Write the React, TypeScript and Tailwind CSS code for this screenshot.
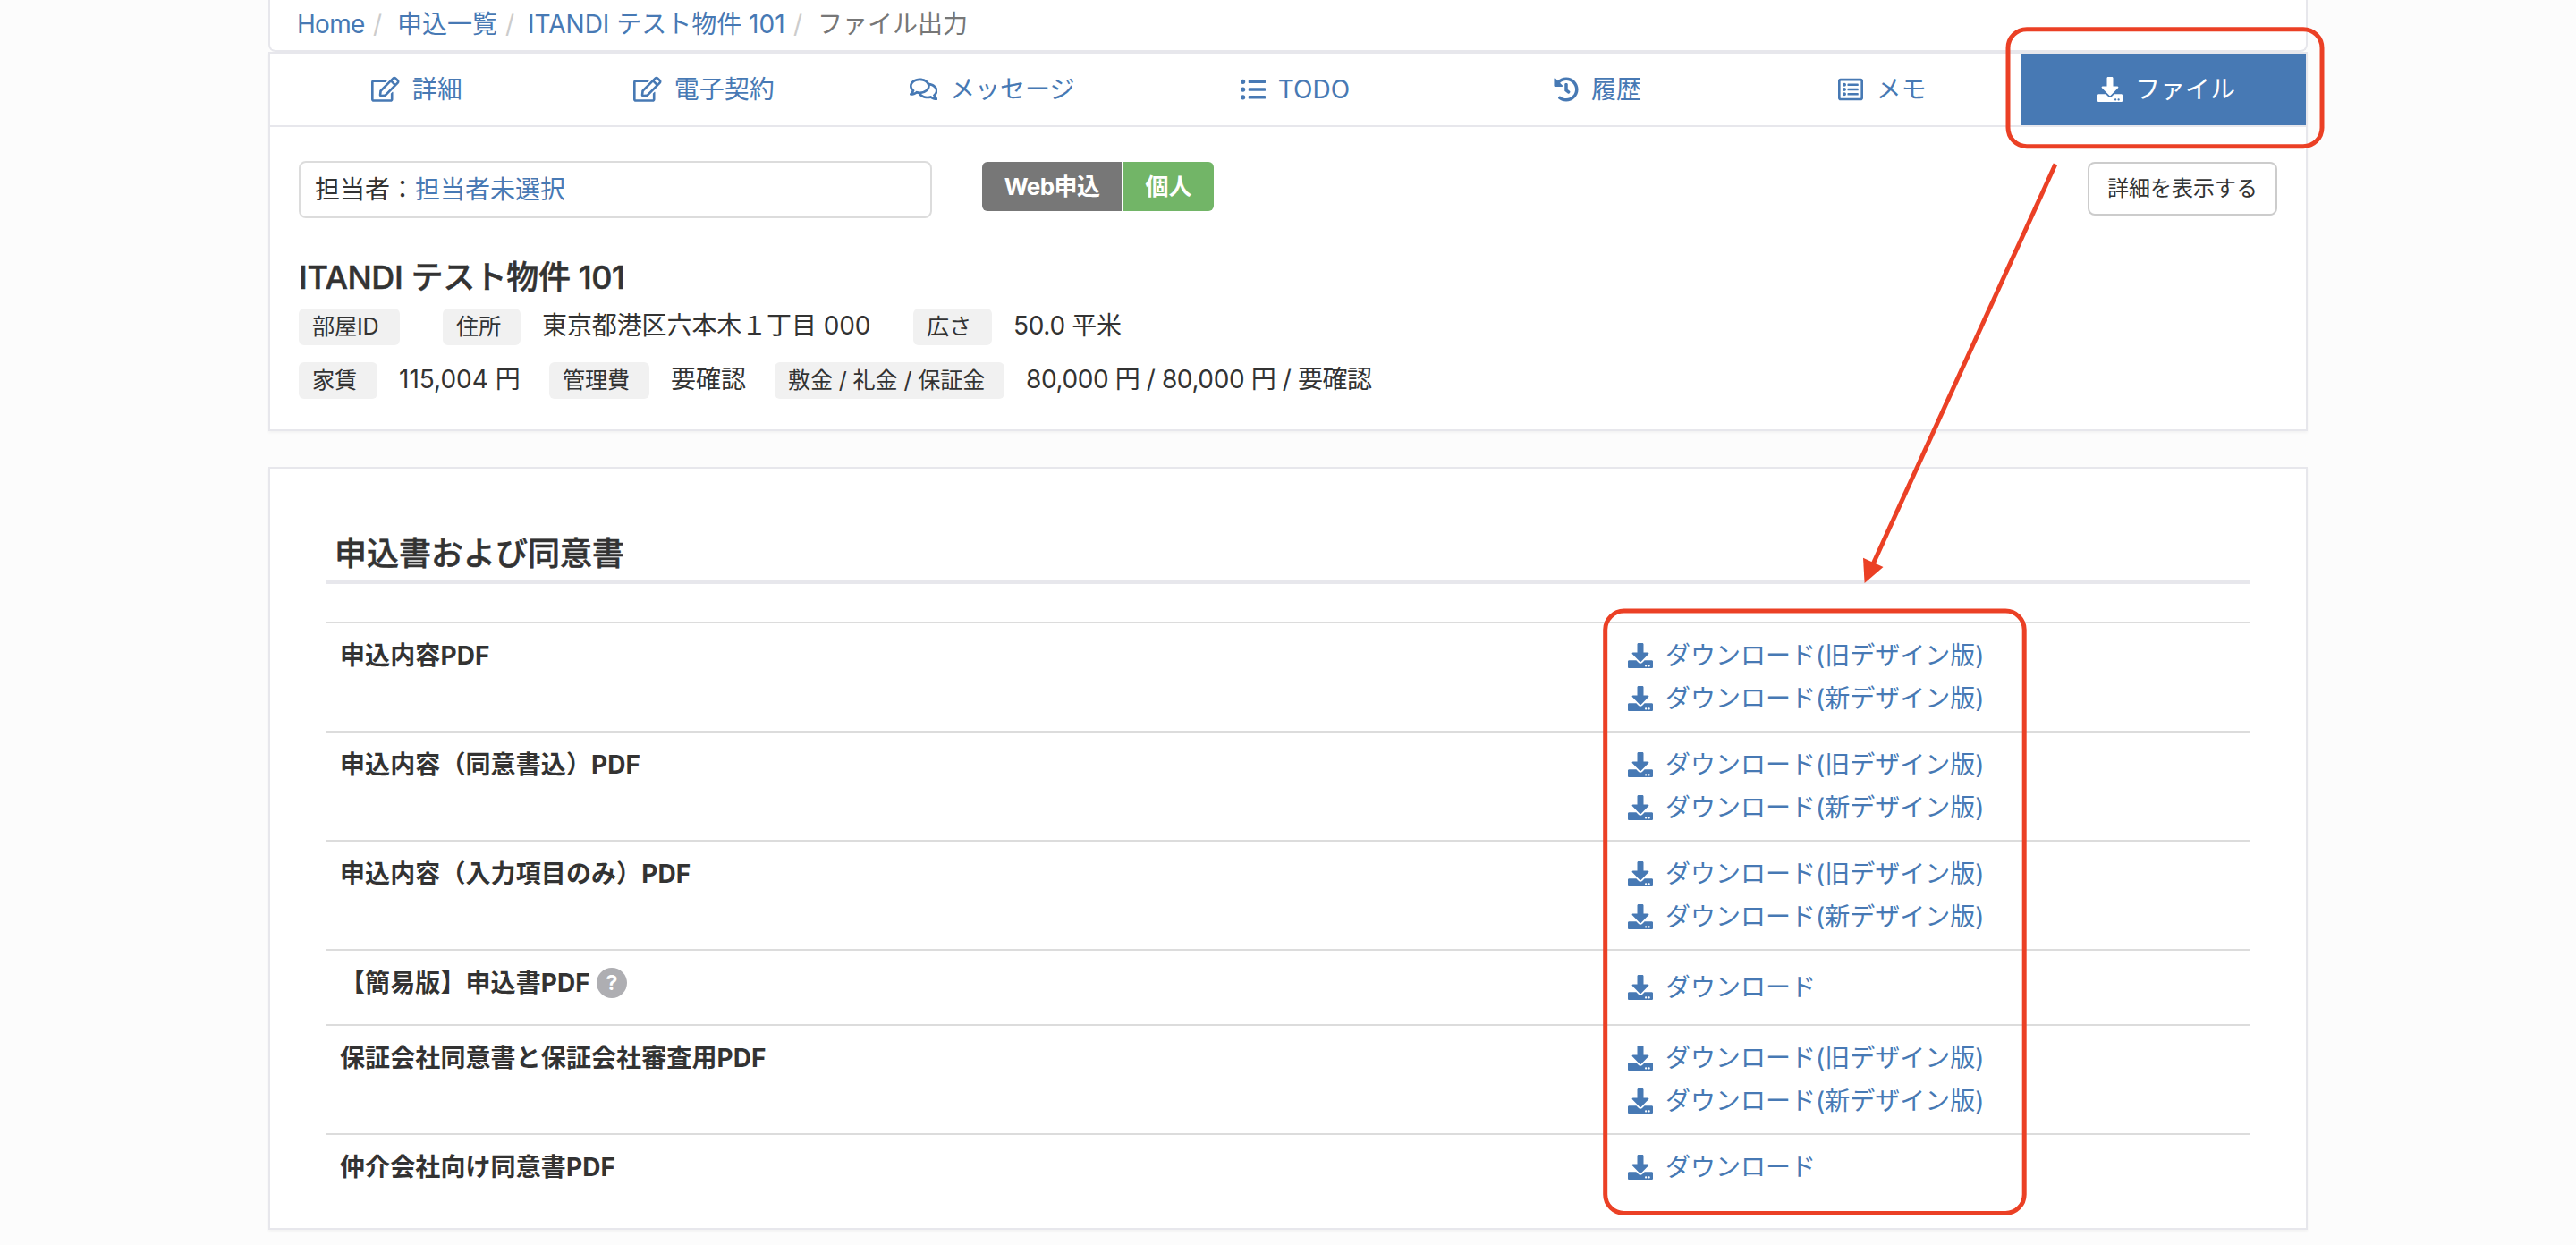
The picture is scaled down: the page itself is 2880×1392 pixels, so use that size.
import React from 'react';
import type { IconType } from 'react-icons';
import { FaRegEdit, FaRegComments, FaListUl, FaHistory, FaRegListAlt, FaDownload } from 'react-icons/fa';

const tabs: { name: string; icon: IconType; width: string; wide?: boolean; active?: boolean }[] = [
  { name: '詳細', icon: FaRegEdit, width: 'w-[326px] pl-[2px]', wide: true },
  { name: '電子契約', icon: FaRegEdit, width: 'w-[316px] pl-[2px]', wide: true },
  { name: 'メッセージ', icon: FaRegComments, width: 'w-[328px] pl-[2px]', wide: true },
  { name: 'TODO', icon: FaListUl, width: 'w-[352px]' },
  { name: '履歴', icon: FaHistory, width: 'w-[322px] pl-[2px]' },
  { name: 'メモ', icon: FaRegListAlt, width: 'w-[314px] pl-[3px]' },
  { name: 'ファイル', icon: FaDownload, width: 'w-[318px] pl-[6px]', active: true },
];

const bothDesigns = ['ダウンロード(旧デザイン版)', 'ダウンロード(新デザイン版)'];

const files: { name: string; links: string[]; height: string; help?: boolean }[] = [
  { name: '申込内容PDF', links: bothDesigns, height: 'h-[122px]' },
  { name: '申込内容（同意書込）PDF', links: bothDesigns, height: 'h-[122px]' },
  { name: '申込内容（入力項目のみ）PDF', links: bothDesigns, height: 'h-[122px]' },
  { name: '【簡易版】申込書PDF', links: ['ダウンロード'], height: 'h-[84px]', help: true },
  { name: '保証会社同意書と保証会社審査用PDF', links: bothDesigns, height: 'h-[122px]' },
  { name: '仲介会社向け同意書PDF', links: ['ダウンロード'], height: 'h-[74px]' },
];

function Tag({ className, children }: { className: string; children: React.ReactNode }) {
  return (
    <span className={`h-[41px] shrink-0 rounded-md bg-[#f1f1f1] pl-[15px] text-[25.2px] leading-[41px] tracking-[-0.2px] ${className}`}>
      {children}
    </span>
  );
}

function Value({ className, children }: { className: string; children?: React.ReactNode }) {
  return <span className={`h-[41px] shrink-0 leading-[38px] ${className}`}>{children}</span>;
}

// Red frames and arrow drawn on top of the page
function Annotations() {
  return (
    <svg className="pointer-events-none absolute top-0 left-0" width="2880" height="1392" viewBox="0 0 2880 1392" fill="none">
      <rect x="2245" y="32.7" width="351" height="131" rx="21" stroke="#eb4025" strokeWidth="5" />
      <rect x="1794.7" y="683" width="468.5" height="673.5" rx="21" stroke="#eb4025" strokeWidth="5" />
      <path d="M2298 183.500L2093 633" stroke="#eb4025" strokeWidth="5" />
      <path d="M2084.600 652L2083 623.700L2105.500 634Z" fill="#eb4025" />
    </svg>
  );
}

export default function App() {
  return (
    <div className="relative h-[1392px] w-[2880px] overflow-hidden bg-[#fcfcfc] font-['Inter','Noto_Sans_CJK_JP',sans-serif] text-[28px] text-[#333]">
      <div className="mx-auto w-[2280px]">
        {/* Breadcrumb */}
        <nav className="flex h-[58px] items-center rounded-b-lg border-x-2 border-b-2 border-[#e7e7ec] bg-white pb-[3px] pl-[30px] leading-[40px] text-[#4779b4]">
          <a className="w-[83px] tracking-[-0.7px]">Home</a>
          <span className="w-[29px] pl-[2px] text-[#ccc]">/</span>
          <a className="w-[119px]">申込一覧</a>
          <span className="w-[27px] pl-[2px] text-[#ccc]">/</span>
          <a className="w-[295px]">ITANDI テスト物件 101</a>
          <span className="w-[29px] pl-[2px] text-[#ccc]">/</span>
          <span className="text-[#777]">ファイル出力</span>
        </nav>

        <section className="h-[424px] border-2 border-[#e7e7ec] bg-white shadow-[0_2px_3px_rgba(0,0,0,0.04)]">
          {/* Tabs */}
          <div className="flex h-[82px] border-b-2 border-[#e7e7ec]">
            {tabs.map((tab) => {
              const Icon = tab.icon;
              return (
                <a
                  key={tab.name}
                  className={`flex h-[80px] items-center justify-center gap-[14px] ${tab.width} ${
                    tab.active ? 'bg-[#4779b4] text-white' : 'text-[#4779b4]'
                  }`}
                >
                  <Icon className={`shrink-0 ${tab.wide ? 'text-[31.5px]' : ''}`} />
                  <span>{tab.name}</span>
                </a>
              );
            })}
          </div>

          {/* Person in charge, labels */}
          <div className="flex items-start px-8 pt-[38px]">
            <div className="h-[64px] w-[708px] rounded-lg border-2 border-[#dcdcdc] pl-4 leading-[60px]">
              担当者：<a className="text-[#4779b4]">担当者未選択</a>
            </div>
            <div className="mt-px ml-[56px] flex h-[55px] gap-[2px] overflow-hidden rounded-md text-[26px] leading-[55px] font-bold text-white">
              <span className="w-[156px] bg-[#777] text-center tracking-[-0.6px]">Web申込</span>
              <span className="w-[101px] bg-[#72b567] text-center">個人</span>
            </div>
            <button className="mt-px ml-auto h-[60px] w-[212px] rounded-lg border-2 border-[#ccc] text-[24px]">
              詳細を表示する
            </button>
          </div>

          {/* Property */}
          <div className="px-8 pt-[44px]">
            <h1 className="h-[57px] text-[36px] leading-[44px] font-medium tracking-[-0.4px] [-webkit-text-stroke:0.5px_#333]">
              ITANDI テスト物件 101
            </h1>
            <div className="flex h-[60px]">
              <Tag className="w-[113px]">部屋ID</Tag>
              <Tag className="ml-[48px] w-[87px]">住所</Tag>
              <Value className="ml-[24px] w-[415px] tracking-[-0.1px]">東京都港区六本木１丁目 000</Value>
              <Tag className="w-[88px]">広さ</Tag>
              <Value className="ml-[24px] tracking-[-0.3px]">50.0 平米</Value>
            </div>
            <div className="flex">
              <Tag className="w-[88px]">家賃</Tag>
              <Value className="ml-[24px] w-[168px]">115,004 円</Value>
              <Tag className="w-[112px]">管理費</Tag>
              <Value className="ml-[24px] w-[116px]">要確認</Value>
              <Tag className="w-[257px]">敷金 / 礼金 / 保証金</Tag>
              <Value className="ml-[24px] tracking-[-0.4px]">80,000 円 / 80,000 円 / 要確認</Value>
            </div>
          </div>
        </section>

        {/* Application files */}
        <section className="mt-10 h-[853px] border-2 border-[#e7e7ec] bg-white px-[62px] pt-[67px] shadow-[0_2px_3px_rgba(0,0,0,0.04)]">
          <h2 className="h-[62px] border-b-4 border-[#e7e7ec] pl-[10px] text-[36px] leading-[56px] font-medium [-webkit-text-stroke:0.5px_#333]">
            申込書および同意書
          </h2>
          <div className="mt-[42px]">
            {files.map((file) => (
              <div key={file.name} className={`flex border-t-2 border-[#dcdcdc] ${file.height}`}>
                <div className="flex h-[72px] w-[1456px] items-center pl-4 font-bold tracking-[0.1px]">
                  {file.name}
                  {file.help && (
                    <span className="ml-[7px] h-[34px] w-[34px] rounded-full bg-[#aeaeb2] text-center text-[23px] leading-[34px] text-white">
                      ?
                    </span>
                  )}
                </div>
                <div className="flex flex-col justify-center text-[#4779b4]">
                  {file.links.map((link) => (
                    <a key={link} className="flex h-[48px] items-center gap-[14px]">
                      <FaDownload className="shrink-0" />
                      <span>{link}</span>
                    </a>
                  ))}
                </div>
              </div>
            ))}
          </div>
        </section>
      </div>

      <Annotations />
    </div>
  );
}
